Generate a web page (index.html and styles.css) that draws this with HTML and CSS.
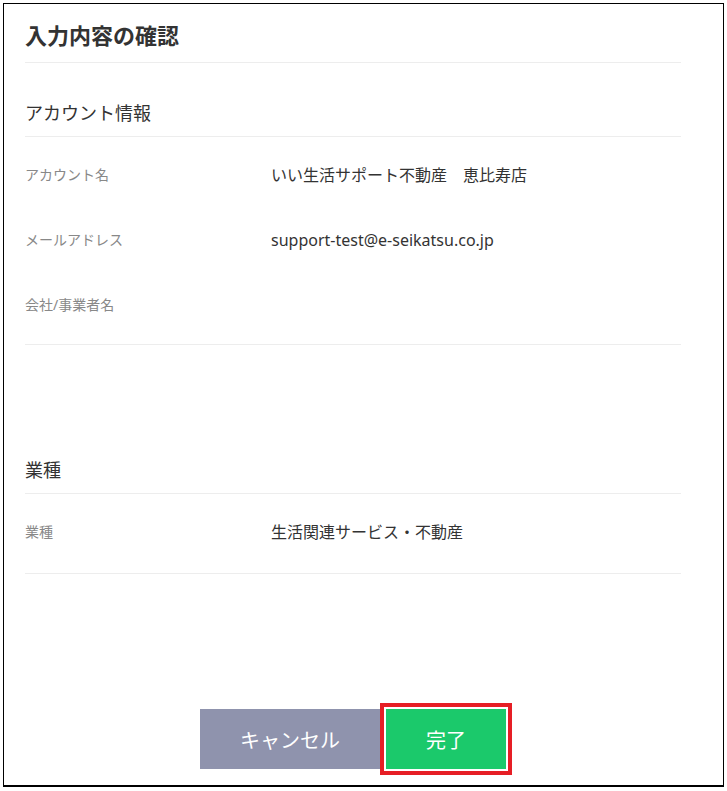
FILE: index.html
```html
<!DOCTYPE html>
<html lang="ja">
<head>
    <meta charset="UTF-8">
    <meta name="viewport" content="width=device-width, initial-scale=1.0">
    <title>入力内容の確認</title>
    <link rel="stylesheet" href="styles.css">
</head>
<body>
    <div class="panel">
        <h1 class="page-title">入力内容の確認</h1>

        <!-- アカウント情報 -->
        <section class="section">
            <h2 class="section-title">アカウント情報</h2>
            <div class="rows">
                <div class="row">
                    <span class="label">アカウント名</span>
                    <span class="value">いい生活サポート不動産　恵比寿店</span>
                </div>
                <div class="row">
                    <span class="label">メールアドレス</span>
                    <span class="value">support-test@e-seikatsu.co.jp</span>
                </div>
                <div class="row">
                    <span class="label">会社/事業者名</span>
                    <span class="value"></span>
                </div>
            </div>
        </section>

        <!-- 業種 -->
        <section class="section section-far">
            <h2 class="section-title">業種</h2>
            <div class="rows rows-last">
                <div class="row">
                    <span class="label">業種</span>
                    <span class="value">生活関連サービス・不動産</span>
                </div>
            </div>
        </section>

        <div class="actions">
            <button class="btn btn-cancel">キャンセル</button>
            <button class="btn btn-done">完了</button>
        </div>
    </div>
</body>
</html>
```

FILE: styles.css
```css
body {
    margin: 3px;
    font-family: "Noto Sans", "Noto Sans CJK JP", sans-serif;
    color: #333;
    background-color: #fff;
}
.panel {
    box-sizing: border-box;
    width: 722px;
    height: 784px;
    border: solid #000;
    border-width: 1px 2px 2px 1px;
    padding: 18px 42px 16px 21px;
    display: flex;
    flex-direction: column;
}
.page-title {
    margin: 0;
    font-size: 22px;
    font-weight: bold;
    line-height: 26px;
    padding-bottom: 14px;
    border-bottom: 1px solid #ededed;
}
.section-title {
    margin: 37px 0 0;
    font-size: 18px;
    font-weight: normal;
    line-height: 26px;
    padding-bottom: 10px;
    border-bottom: 1px solid #ededed;
}
.section-far .section-title {
    margin-top: 112px;
}
.rows {
    padding-bottom: 12px;
    border-bottom: 1px solid #ededed;
}
.rows-last {
    padding-bottom: 14px;
}
.row {
    display: flex;
    align-items: center;
    height: 65px;
    box-sizing: border-box;
    padding-top: 26px;
    padding-bottom: 15px;
    line-height: 24px;
}
.label {
    width: 246px;
    font-size: 14px;
    color: #888;
}
.value {
    flex: 1;
    font-size: 16px;
    color: #333;
}
.actions {
    margin-top: auto;
    display: flex;
    justify-content: center;
    gap: 6px;
}
.btn {
    height: 60px;
    border: none;
    border-radius: 0;
    color: #fff;
    font-family: inherit;
    font-size: 20px;
    cursor: pointer;
}
.btn-cancel {
    width: 180px;
    background-color: #8f93ad;
}
.btn-done {
    width: 120px;
    background-color: #1bc96b;
    box-shadow: 0 0 0 2px #fff, 0 0 0 6px #e61e25;
}
```
